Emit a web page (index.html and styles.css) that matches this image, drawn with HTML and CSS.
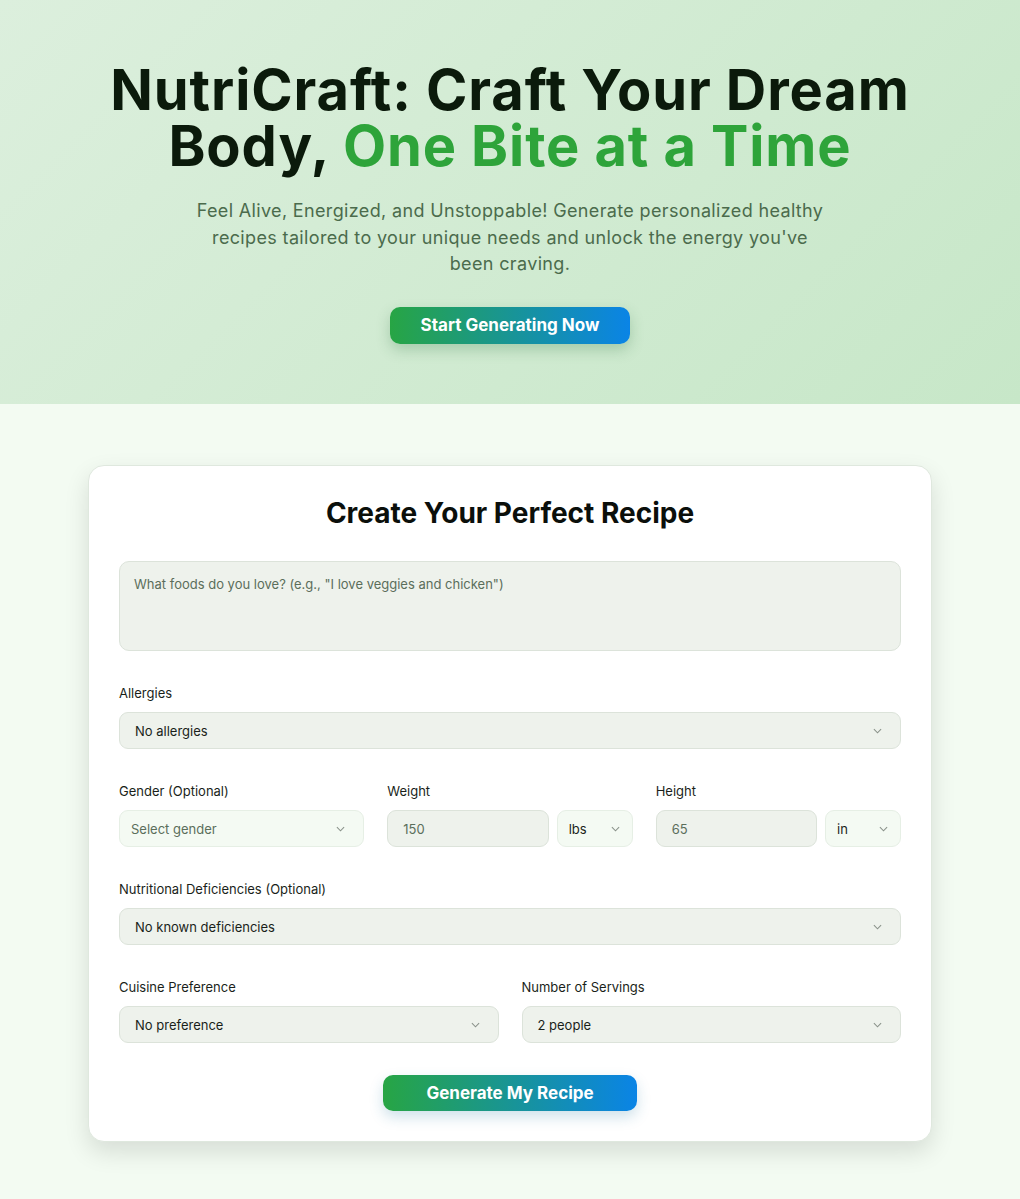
FILE: index.html
```html
<!DOCTYPE html>
<html lang="en">
<head>
<meta charset="utf-8">
<title>NutriCraft</title>
<link rel="stylesheet" href="styles.css">
</head>
<body>
<header class="hero">
  <h1 class="hero-title">NutriCraft: Craft Your Dream<br>Body, <span class="accent">One Bite at a Time</span></h1>
  <p class="hero-sub">Feel Alive, Energized, and Unstoppable! Generate personalized healthy recipes tailored to your unique needs and unlock the energy you've been craving.</p>
  <button class="btn btn-hero">Start Generating Now</button>
</header>
<main class="main">
  <section class="card">
    <h2 class="card-title">Create Your Perfect Recipe</h2>
    <div class="group group-text">
      <div class="textarea">What foods do you love? (e.g., "I love veggies and chicken")</div>
    </div>
    <div class="group">
      <div class="label">Allergies</div>
      <div class="select"><span>No allergies</span><svg class="chev" viewBox="0 0 10 6"><path d="M1 1l4 4 4-4"/></svg></div>
    </div>
    <div class="group grid3">
      <div class="col">
        <div class="label">Gender (Optional)</div>
        <div class="select light muted"><span>Select gender</span><svg class="chev" viewBox="0 0 10 6"><path d="M1 1l4 4 4-4"/></svg></div>
      </div>
      <div class="col">
        <div class="label">Weight</div>
        <div class="pair">
          <div class="input">150</div>
          <div class="select light unit"><span>lbs</span><svg class="chev" viewBox="0 0 10 6"><path d="M1 1l4 4 4-4"/></svg></div>
        </div>
      </div>
      <div class="col">
        <div class="label">Height</div>
        <div class="pair">
          <div class="input">65</div>
          <div class="select light unit"><span>in</span><svg class="chev" viewBox="0 0 10 6"><path d="M1 1l4 4 4-4"/></svg></div>
        </div>
      </div>
    </div>
    <div class="group">
      <div class="label">Nutritional Deficiencies (Optional)</div>
      <div class="select"><span>No known deficiencies</span><svg class="chev" viewBox="0 0 10 6"><path d="M1 1l4 4 4-4"/></svg></div>
    </div>
    <div class="group grid2">
      <div class="col">
        <div class="label">Cuisine Preference</div>
        <div class="select"><span>No preference</span><svg class="chev" viewBox="0 0 10 6"><path d="M1 1l4 4 4-4"/></svg></div>
      </div>
      <div class="col">
        <div class="label">Number of Servings</div>
        <div class="select"><span>2 people</span><svg class="chev" viewBox="0 0 10 6"><path d="M1 1l4 4 4-4"/></svg></div>
      </div>
    </div>
    <div class="actions">
      <button class="btn btn-gen">Generate My Recipe</button>
    </div>
  </section>
</main>
</body>
</html>
```
FILE: styles.css
```css
* { box-sizing: border-box; }
html, body { margin: 0; padding: 0; }
body {
  font-family: "Inter", "Noto Sans", sans-serif;
  background: #f3fbf2;
  color: #111;
}
.hero {
  height: 404px;
  background: linear-gradient(135deg, #dcefdd 0%, #c7e7c8 100%);
  text-align: center;
  padding-top: 62px;
}
.hero-title {
  margin: 0;
  font-size: 56px;
  line-height: 56px;
  font-weight: 700;
  color: #0b1a0b;
  letter-spacing: 0.9px;
}
.accent { color: #2ea43a; }
.hero-sub {
  width: 640px;
  margin: 24px auto 0;
  font-size: 18px;
  line-height: 26.5px;
  letter-spacing: 0.35px;
  color: #4b6b4c;
}
.btn {
  border: none;
  color: #fff;
  font-family: inherit;
  font-weight: 700;
  background: linear-gradient(90deg, #27a544 0%, #0a84e6 100%);
  border-radius: 10px;
  cursor: pointer;
}
.btn-hero {
  margin-top: 29px;
  width: 240px;
  height: 37px;
  font-size: 17px;
  box-shadow: 0 6px 14px rgba(40, 110, 60, 0.25);
}
.main {
  padding: 61px 0 58px;
}
.card {
  width: 844px;
  margin: 0 auto;
  background: #fff;
  border: 1px solid #dfe8de;
  border-radius: 16px;
  padding: 30px 30px 30px;
  box-shadow: 0 10px 25px rgba(0, 0, 0, 0.12);
}
.card-title {
  margin: 0 0 31px;
  text-align: center;
  font-size: 28px;
  line-height: 34px;
  font-weight: 700;
  color: #0b0f0b;
}
.group { margin-bottom: 33px; }
.group-text { margin-bottom: 33px; }
.textarea {
  height: 90px;
  background: #eef2ec;
  border: 1px solid #dce3da;
  border-radius: 10px;
  padding: 13px 14px;
  font-size: 13px;
  line-height: 18px;
  color: #5b6e5b;
}
.label {
  font-size: 13px;
  line-height: 18px;
  color: #1a1f1a;
  margin-bottom: 10px;
}
.select, .input {
  height: 37px;
  border: 1px solid #dce3da;
  border-radius: 9px;
  background: #eef2ec;
  font-size: 13px;
  color: #1a1f1a;
  display: flex;
  align-items: center;
  justify-content: space-between;
  padding: 0 18px 0 15px;
}
.select.light {
  background: #f4faf3;
  border-color: #e6efe5;
}
.select.muted { color: #5b6e5b; padding-left: 11px; }
.select.unit { padding: 0 12px 0 11px; }
.input { color: #5b6e5b; padding-left: 15px; }
.chev {
  width: 9px;
  height: 6px;
  fill: none;
  stroke: #8a928a;
  stroke-width: 1.2;
  flex: none;
}
.grid3 {
  display: grid;
  grid-template-columns: repeat(3, 1fr);
  column-gap: 23px;
}
.grid2 {
  display: grid;
  grid-template-columns: repeat(2, 1fr);
  column-gap: 23px;
}
.pair {
  display: grid;
  grid-template-columns: 1fr 76px;
  column-gap: 8px;
}
.actions {
  display: flex;
  justify-content: center;
  margin-top: -1px;
}
.btn-gen {
  width: 254px;
  height: 36px;
  font-size: 17px;
  box-shadow: 0 6px 14px rgba(30, 120, 160, 0.22);
}
```
